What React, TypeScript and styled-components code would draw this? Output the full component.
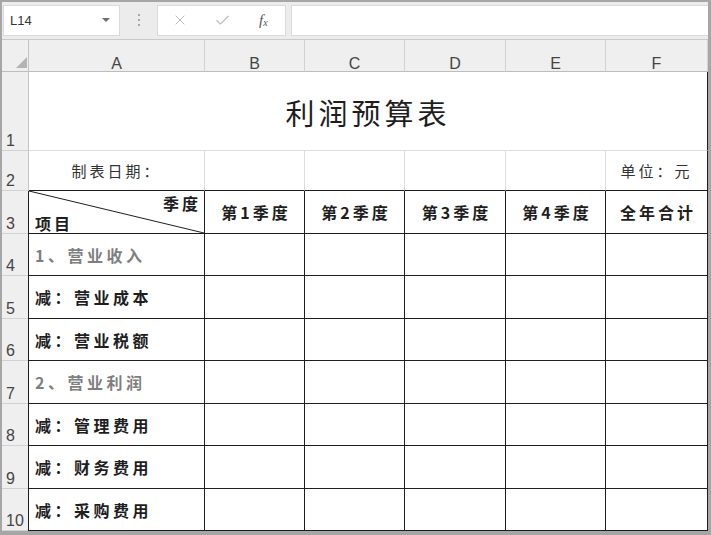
import React from "react";
import styled, { createGlobalStyle } from "styled-components";
import { X, Check } from "lucide-react";

const GlobalStyle = createGlobalStyle`
  html, body { margin: 0; padding: 0; background: #ffffff; }
  body { width: 711px; height: 535px; overflow: hidden; font-family: "Noto Sans CJK SC", "Noto Sans", sans-serif; }
`;

const Frame = styled.div`
  width: 711px;
  height: 535px;
  box-sizing: border-box;
  border-top: 2px solid #a6a6a6;
  border-left: 2px solid #a6a6a6;
  border-right: 3px solid #a6a6a6;
  border-bottom: 4px solid #a6a6a6;
  display: flex;
  flex-direction: column;
  overflow: hidden;
  background: #fff;
`;

const FormulaBar = styled.div`
  height: 38px;
  box-sizing: border-box;
  background: #ececec;
  border-bottom: 1px solid #c9c9c9;
  display: flex;
  align-items: center;
  padding: 3px 0 4px 1px;
`;

const NameBox = styled.div`
  width: 117px;
  height: 31px;
  box-sizing: border-box;
  background: #fff;
  border: 1px solid #dadada;
  display: flex;
  align-items: center;
  justify-content: space-between;
  padding: 0 9px 0 6px;
  font-family: "Liberation Sans", Arial, sans-serif;
  font-size: 13px;
  color: #333;
`;

const Caret = styled.span`
  width: 0;
  height: 0;
  border-left: 4px solid transparent;
  border-right: 4px solid transparent;
  border-top: 4px solid #707070;
`;

const Grip = styled.div`
  width: 37px;
  display: flex;
  flex-direction: column;
  align-items: center;
  gap: 3px;
`;

const GripDot = styled.span`
  width: 2px;
  height: 2px;
  background: #a8a8a8;
`;

const FuncBox = styled.div`
  width: 129px;
  height: 31px;
  box-sizing: border-box;
  background: #fff;
  border: 1px solid #dadada;
  display: flex;
  align-items: center;
  padding-left: 14px;
  gap: 26px;
  color: #b8b8b8;
`;

const Fx = styled.span`
  font-family: "Liberation Serif", "Times New Roman", serif;
  font-style: italic;
  font-size: 15px;
  color: #555;
  font-weight: 400;
  margin-left: 2px;
  & sub {
    font-size: 10px;
    vertical-align: baseline;
    position: relative;
    top: 1px;
  }
`;

const InputBox = styled.div`
  flex: 1;
  height: 31px;
  margin-left: 5px;
  box-sizing: border-box;
  background: #fff;
  border: 1px solid #dadada;
  border-right: none;
`;

const Sheet = styled.div`
  display: grid;
  grid-template-columns: 27px 176px 100px 100px 101px 100px 102px;
  grid-template-rows: 32px 79px 40px 43px 42px 43px 42px 43px 42px 43px 42px;
`;

const Corner = styled.div`
  background: #efefef;
  border-right: 1px solid #c4c4c4;
  border-bottom: 1px solid #bdbdbd;
  box-sizing: border-box;
  display: flex;
  align-items: flex-end;
  justify-content: flex-end;
  padding: 0 1px 3px 0;
`;

const CornerTri = styled.span`
  width: 0;
  height: 0;
  border-left: 11px solid transparent;
  border-bottom: 11px solid #b4b4b4;
`;

const ColHead = styled.div`
  background: #efefef;
  border-right: 1px solid #d2d2d2;
  border-bottom: 1px solid #bdbdbd;
  box-sizing: border-box;
  display: flex;
  align-items: flex-end;
  justify-content: center;
  padding-bottom: 0;
  font-family: "Liberation Sans", Arial, sans-serif;
  font-size: 16px;
  line-height: 15px;
  color: #444;
`;

const RowHead = styled.div<{ $dark?: boolean }>`
  background: #efefef;
  border-right: 1px solid ${(p) => (p.$dark ? "#7a7a7a" : "#c4c4c4")};
  border-bottom: 1px solid #d2d2d2;
  box-sizing: border-box;
  display: flex;
  align-items: flex-end;
  padding: 0 0 0 4px;
  font-family: "Liberation Sans", Arial, sans-serif;
  font-size: 16px;
  line-height: 18px;
  color: #444;
`;

const TitleCell = styled.div`
  grid-column: span 6;
  border-bottom: 1px solid #dcdcdc;
  border-right: 1px solid #1e1e1e;
  box-sizing: border-box;
  display: flex;
  align-items: center;
  justify-content: center;
  font-size: 29px;
  letter-spacing: 4px;
  color: #1e1e1e;
  padding-top: 2px;
`;

const PlainCell = styled.div<{ $last?: boolean }>`
  border-right: 1px solid ${(p) => (p.$last ? "#1e1e1e" : "#dcdcdc")};
  border-bottom: 1px solid #1e1e1e;
  box-sizing: border-box;
  display: flex;
  align-items: center;
  justify-content: center;
  font-size: 15px;
  letter-spacing: 3px;
  color: #333;
`;

const TableCell = styled.div<{ $first?: boolean }>`
  border-right: 1px solid #1e1e1e;
  border-bottom: 1px solid #1e1e1e;
  box-sizing: border-box;
  ${(p) => (p.$first ? "margin-left: -1px; border-left: 1px solid #1e1e1e;" : "")}
`;

const HeadCell = styled(TableCell)`
  display: flex;
  align-items: center;
  justify-content: center;
  font-size: 16px;
  font-weight: 700;
  letter-spacing: 3px;
  color: #1e1e1e;
  padding-left: 3px;
`;

const DiagCell = styled(TableCell)`
  position: relative;
  display: flex;
  flex-direction: column;
  justify-content: space-between;
  padding: 2px 6px 0 6px;
  font-size: 16px;
  font-weight: 700;
  letter-spacing: 3px;
  color: #1e1e1e;
  line-height: 20px;
`;

const DiagLine = styled.svg`
  position: absolute;
  left: 0;
  top: 0;
  width: 100%;
  height: 100%;
  pointer-events: none;
`;

const TopRight = styled.span`
  align-self: flex-end;
  margin-right: -3px;
`;

const LabelCell = styled(TableCell)<{ $muted?: boolean }>`
  display: flex;
  align-items: center;
  padding-left: 6px;
  font-size: 16px;
  font-weight: 700;
  letter-spacing: 3.5px;
  color: ${(p) => (p.$muted ? "#7f7f7f" : "#1e1e1e")};
`;

const quarters = ["第1季度", "第2季度", "第3季度", "第4季度", "全年合计"];
const rows: { label: string; muted?: boolean }[] = [
  { label: "1、营业收入", muted: true },
  { label: "减：营业成本" },
  { label: "减：营业税额" },
  { label: "2、营业利润", muted: true },
  { label: "减：管理费用" },
  { label: "减：财务费用" },
  { label: "减：采购费用" },
];

export default function App() {
  return (
    <>
      <GlobalStyle />
      <Frame>
        <FormulaBar>
          <NameBox>
            <span>L14</span>
            <Caret />
          </NameBox>
          <Grip>
            <GripDot />
            <GripDot />
            <GripDot />
          </Grip>
          <FuncBox>
            <X size={16} strokeWidth={1.5} />
            <Check size={17} strokeWidth={1.5} />
            <Fx>
              f<sub>x</sub>
            </Fx>
          </FuncBox>
          <InputBox />
        </FormulaBar>
        <Sheet>
          <Corner>
            <CornerTri />
          </Corner>
          {["A", "B", "C", "D", "E", "F"].map((c) => (
            <ColHead key={c}>{c}</ColHead>
          ))}

          <RowHead>1</RowHead>
          <TitleCell>利润预算表</TitleCell>

          <RowHead>2</RowHead>
          <PlainCell>制表日期：</PlainCell>
          <PlainCell />
          <PlainCell />
          <PlainCell />
          <PlainCell />
          <PlainCell $last>单位：元</PlainCell>

          <RowHead $dark>3</RowHead>
          <DiagCell $first>
            <DiagLine viewBox="0 0 100 100" preserveAspectRatio="none">
              <line x1="0" y1="0" x2="100" y2="100" stroke="#1e1e1e" strokeWidth="1" vectorEffect="non-scaling-stroke" />
            </DiagLine>
            <TopRight>季度</TopRight>
            <span>项目</span>
          </DiagCell>
          {quarters.map((q) => (
            <HeadCell key={q}>{q}</HeadCell>
          ))}

          {rows.map((r, i) => (
            <React.Fragment key={r.label}>
              <RowHead $dark>{i + 4}</RowHead>
              <LabelCell $first $muted={r.muted}>
                {r.label}
              </LabelCell>
              {quarters.map((q) => (
                <TableCell key={q} />
              ))}
            </React.Fragment>
          ))}
        </Sheet>
      </Frame>
    </>
  );
}
